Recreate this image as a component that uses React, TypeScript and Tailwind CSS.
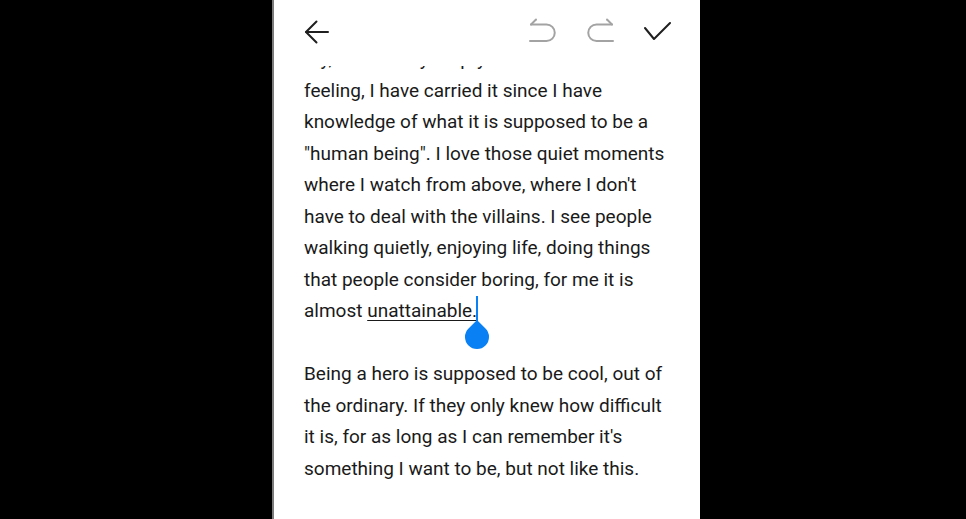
import React from 'react';

function BackIcon() {
	return (
		<svg width="28" height="28" viewBox="0 0 28 28" fill="none" stroke="#1f1f1f" strokeWidth="2" strokeLinecap="round" strokeLinejoin="round">
			<path d="M3 14 H25" />
			<path d="M13.5 3.5 L3 14 L13.5 24.5" />
		</svg>
	);
}

function UndoIcon({ flip }: { flip?: boolean }) {
	return (
		<svg width="28" height="28" viewBox="0 0 28 28" fill="none" stroke="#a3a3a3" strokeWidth="2" strokeLinecap="round" strokeLinejoin="round" className={flip ? '-scale-x-100' : ''}>
			<path d="M3 6.5 H18.5 A8.25 8.25 0 0 1 18.5 23 H2" />
			<path d="M3 6.5 L8 1.5" />
		</svg>
	);
}

function CheckIcon() {
	return (
		<svg width="28" height="28" viewBox="0 0 28 28" fill="none" stroke="#1f1f1f" strokeWidth="2" strokeLinecap="round" strokeLinejoin="round">
			<path d="M1 10 L10 21 L26 5" />
		</svg>
	);
}

function Cursor() {
	return (
		<span className="relative inline-block w-0 h-[1em] align-baseline">
			<span className="absolute left-[-1px] top-[-2px] w-[2px] h-[25px] bg-[#0a80f5]" />
			<span className="absolute left-[-12px] top-[27px] w-[24px] h-[24px] rounded-full rounded-tl-none rotate-45 bg-[#0a80f5]" />
		</span>
	);
}

export default function App() {
	return (
		<div className="w-[966px] h-[519px] bg-black flex overflow-hidden" style={{ fontFamily: 'Roboto, "Liberation Sans", sans-serif' }}>
			<div className="ml-[272px] w-[428px] h-full bg-white border-l-2 border-[#7c7c7c] flex flex-col">
				{/* toolbar */}
				<div className="h-[66px] shrink-0 flex items-start pt-[18px] pl-[29px] pr-[28px] relative z-10 bg-white">
					<BackIcon />
					<div className="ml-auto flex items-center">
						<span className="mr-[31px]"><UndoIcon /></span>
						<span className="mr-[29px]"><UndoIcon flip /></span>
						<CheckIcon />
					</div>
				</div>

				<div className="flex-1 overflow-hidden">
					<div className="mt-[-22.7px] pl-[30px] pr-[20px] text-[19px] leading-[31.5px] text-[#1a1a1a] whitespace-nowrap">
						<p className="mb-[31.5px]">
							My, this is truly empty<br />
							feeling, I have carried it since I have<br />
							knowledge of what it is supposed to be a<br />
							"human being". I love those quiet moments<br />
							where I watch from above, where I don't<br />
							have to deal with the villains. I see people<br />
							walking quietly, enjoying life, doing things<br />
							that people consider boring, for me it is<br />
							almost <span className="underline decoration-1 underline-offset-[3px]">unattainable.</span>
							<Cursor />
						</p>
						<p>
							Being a hero is supposed to be cool, out of<br />
							the ordinary. If they only knew how difficult<br />
							it is, for as long as I can remember it's<br />
							something I want to be, but not like this.
						</p>
					</div>
				</div>
			</div>
		</div>
	);
}
